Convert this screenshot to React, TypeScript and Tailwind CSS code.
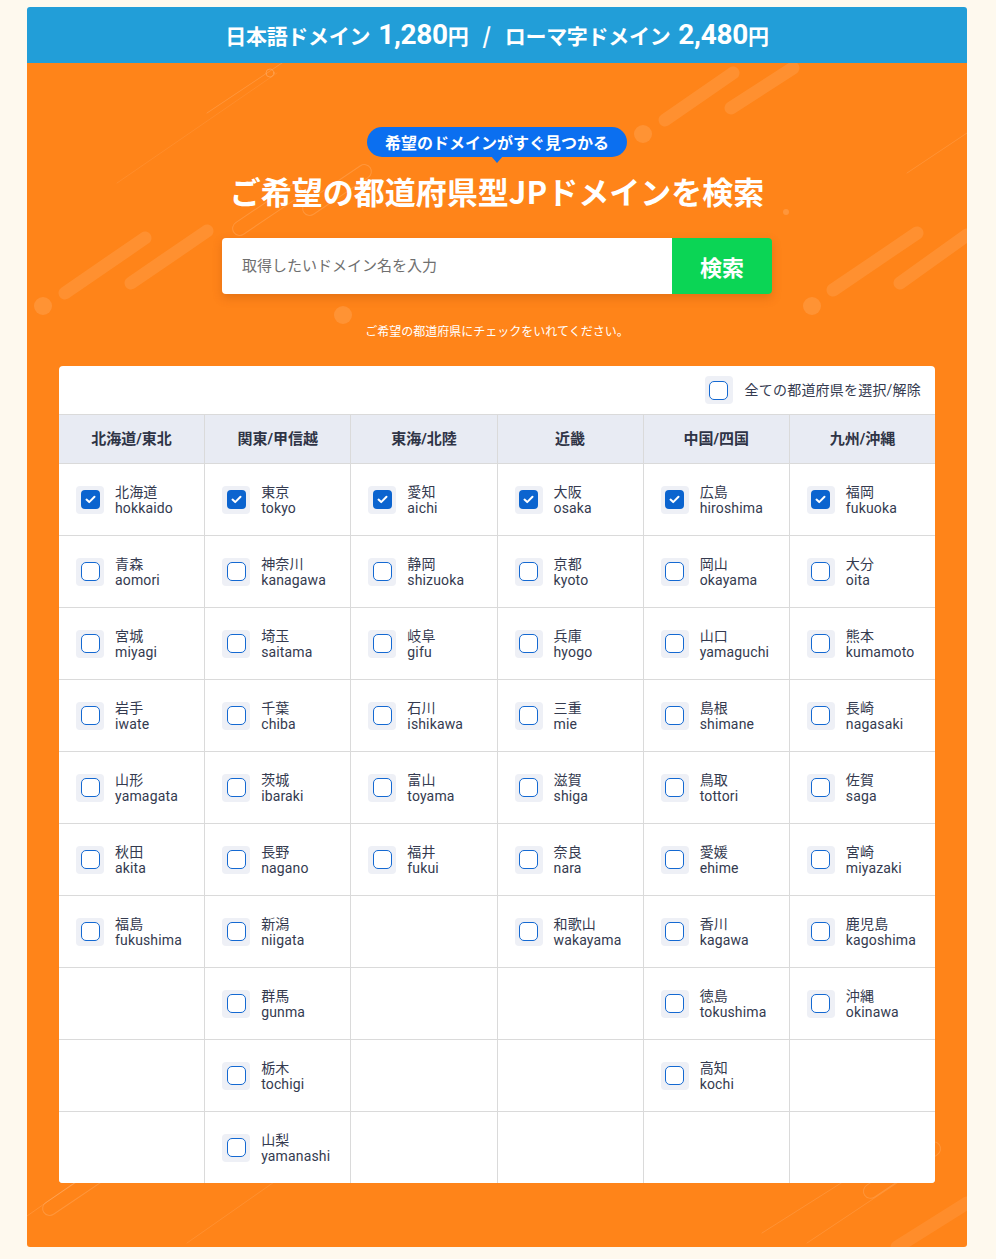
import React from "react";

type Pref = { ja: string; en: string; checked?: boolean };

const columns: { title: string; items: Pref[] }[] = [
  {
    title: "北海道/東北",
    items: [
      { ja: "北海道", en: "hokkaido", checked: true },
      { ja: "青森", en: "aomori" },
      { ja: "宮城", en: "miyagi" },
      { ja: "岩手", en: "iwate" },
      { ja: "山形", en: "yamagata" },
      { ja: "秋田", en: "akita" },
      { ja: "福島", en: "fukushima" },
    ],
  },
  {
    title: "関東/甲信越",
    items: [
      { ja: "東京", en: "tokyo", checked: true },
      { ja: "神奈川", en: "kanagawa" },
      { ja: "埼玉", en: "saitama" },
      { ja: "千葉", en: "chiba" },
      { ja: "茨城", en: "ibaraki" },
      { ja: "長野", en: "nagano" },
      { ja: "新潟", en: "niigata" },
      { ja: "群馬", en: "gunma" },
      { ja: "栃木", en: "tochigi" },
      { ja: "山梨", en: "yamanashi" },
    ],
  },
  {
    title: "東海/北陸",
    items: [
      { ja: "愛知", en: "aichi", checked: true },
      { ja: "静岡", en: "shizuoka" },
      { ja: "岐阜", en: "gifu" },
      { ja: "石川", en: "ishikawa" },
      { ja: "富山", en: "toyama" },
      { ja: "福井", en: "fukui" },
    ],
  },
  {
    title: "近畿",
    items: [
      { ja: "大阪", en: "osaka", checked: true },
      { ja: "京都", en: "kyoto" },
      { ja: "兵庫", en: "hyogo" },
      { ja: "三重", en: "mie" },
      { ja: "滋賀", en: "shiga" },
      { ja: "奈良", en: "nara" },
      { ja: "和歌山", en: "wakayama" },
    ],
  },
  {
    title: "中国/四国",
    items: [
      { ja: "広島", en: "hiroshima", checked: true },
      { ja: "岡山", en: "okayama" },
      { ja: "山口", en: "yamaguchi" },
      { ja: "島根", en: "shimane" },
      { ja: "鳥取", en: "tottori" },
      { ja: "愛媛", en: "ehime" },
      { ja: "香川", en: "kagawa" },
      { ja: "徳島", en: "tokushima" },
      { ja: "高知", en: "kochi" },
    ],
  },
  {
    title: "九州/沖縄",
    items: [
      { ja: "福岡", en: "fukuoka", checked: true },
      { ja: "大分", en: "oita" },
      { ja: "熊本", en: "kumamoto" },
      { ja: "長崎", en: "nagasaki" },
      { ja: "佐賀", en: "saga" },
      { ja: "宮崎", en: "miyazaki" },
      { ja: "鹿児島", en: "kagoshima" },
      { ja: "沖縄", en: "okinawa" },
    ],
  },
];

function Check({ checked }: { checked?: boolean }) {
  return (
    <div className="flex h-[28px] w-[28px] shrink-0 items-center justify-center rounded-[4px] bg-[#eef0f6]">
      {checked ? (
        <div className="flex h-[19px] w-[19px] items-center justify-center rounded-[4px] bg-[#0b64cf]">
          <svg width="11" height="9" viewBox="0 0 11 9" fill="none">
            <path d="M1.5 4.6 L4.2 7.1 L9.5 1.8" stroke="white" strokeWidth="2" strokeLinecap="round" strokeLinejoin="round" />
          </svg>
        </div>
      ) : (
        <div className="h-[19px] w-[19px] rounded-[5px] border-[1.5px] border-[#1469d2] bg-white" />
      )}
    </div>
  );
}

function Decorations() {
  return (
    <svg className="pointer-events-none absolute inset-0 h-full w-full" viewBox="0 0 940 1184" preserveAspectRatio="none">
      <g stroke="white" strokeLinecap="round" fill="none">
        <line x1="38" y1="230" x2="118" y2="175" strokeWidth="13" strokeOpacity="0.1" />
        <line x1="104" y1="220" x2="180" y2="168" strokeWidth="13" strokeOpacity="0.1" />
        <line x1="638" y1="57" x2="706" y2="10" strokeWidth="13" strokeOpacity="0.1" />
        <line x1="704" y1="45" x2="766" y2="5" strokeWidth="13" strokeOpacity="0.1" />
        <line x1="806" y1="227" x2="890" y2="170" strokeWidth="13" strokeOpacity="0.1" />
        <line x1="873" y1="220" x2="940" y2="172" strokeWidth="13" strokeOpacity="0.1" />
        <line x1="180" y1="50" x2="270" y2="-10" strokeWidth="1" strokeOpacity="0.15" />
        <line x1="90" y1="120" x2="250" y2="10" strokeWidth="1" strokeOpacity="0.08" />
        <line x1="880" y1="110" x2="940" y2="70" strokeWidth="1" strokeOpacity="0.12" />
        <rect x="200" y="140" width="80" height="14" rx="7" transform="rotate(-34 240 147)" strokeWidth="1" strokeOpacity="0.15" />
        <rect x="270" y="120" width="80" height="14" rx="7" transform="rotate(-34 310 127)" strokeWidth="1" strokeOpacity="0.15" />
        <rect x="10" y="1120" width="80" height="14" rx="7" transform="rotate(-34 50 1127)" strokeWidth="1" strokeOpacity="0.15" />
        <rect x="830" y="1100" width="90" height="14" rx="7" transform="rotate(-34 875 1107)" strokeWidth="1" strokeOpacity="0.15" />
        <line x1="-10" y1="1160" x2="90" y2="1090" strokeWidth="1" strokeOpacity="0.12" />
        <line x1="160" y1="1180" x2="260" y2="1110" strokeWidth="1" strokeOpacity="0.1" />
        <line x1="735" y1="1170" x2="830" y2="1110" strokeWidth="1" strokeOpacity="0.12" />
        <line x1="780" y1="1180" x2="900" y2="1100" strokeWidth="1" strokeOpacity="0.12" />
        <line x1="870" y1="1184" x2="940" y2="1140" strokeWidth="13" strokeOpacity="0.08" />
        <circle cx="243" cy="10" r="4" strokeWidth="1" strokeOpacity="0.2" />
      </g>
      <g fill="white">
        <circle cx="16" cy="243" r="9" fillOpacity="0.12" />
        <circle cx="316" cy="252" r="9" fillOpacity="0.12" />
        <circle cx="616" cy="71" r="9" fillOpacity="0.12" />
        <circle cx="785" cy="243" r="9" fillOpacity="0.12" />
        <circle cx="759" cy="149" r="3" fillOpacity="0.15" />
        <circle cx="-10" cy="1093" r="9" fillOpacity="0.12" />
      </g>
    </svg>
  );
}

export default function App() {
  const rows = 10;
  const cells: React.ReactNode[] = [];
  for (let r = 0; r < rows; r++) {
    for (let c = 0; c < 6; c++) {
      const item = columns[c].items[r];
      cells.push(
        <div key={`${r}-${c}`} className="flex h-[71px] items-center bg-white pl-[17px]">
          {item && (
            <>
              <Check checked={item.checked} />
              <div className="ml-[11px] flex flex-col text-[14px] leading-[16px] tracking-[0.15px] text-[#343a4f]">
                <span>{item.ja}</span>
                <span>{item.en}</span>
              </div>
            </>
          )}
        </div>
      );
    }
  }

  return (
    <div
      className="min-h-[1259px] bg-[#fef9ee] pt-[7px]"
      style={{ fontFamily: 'Roboto, "Noto Sans CJK JP", sans-serif' }}
    >
      <div className="ml-[27px] w-[940px] overflow-hidden rounded-t-[3px] rounded-b-[3px]">
        <div className="flex h-[56px] items-center justify-center bg-[#229ed8] text-white" style={{ fontFamily: '"Noto Sans CJK JP", sans-serif' }}>
          <div className="flex items-baseline font-bold tracking-[-0.3px]">
            <span className="text-[21px]">日本語ドメイン</span>
            <span className="ml-[8px] text-[28px]" style={{ fontFamily: 'Roboto, sans-serif' }}>1,280</span>
            <span className="text-[21px]">円</span>
            <span className="mx-[14px] text-[22px]">/</span>
            <span className="text-[21px]">ローマ字ドメイン</span>
            <span className="ml-[8px] text-[28px]" style={{ fontFamily: 'Roboto, sans-serif' }}>2,480</span>
            <span className="text-[21px]">円</span>
          </div>
        </div>

        <div className="relative bg-[#ff8419] pb-[64px] pt-[64px]">
          <Decorations />
          <div className="relative flex flex-col items-center">
            <div className="relative flex h-[30px] items-center rounded-full bg-[#0b6ff0] px-[18px] text-[16px] font-bold text-white" style={{ fontFamily: '"Noto Sans CJK JP", sans-serif' }}>
              希望のドメインがすぐ見つかる
              <div className="absolute bottom-[-6px] left-1/2 h-0 w-0 -translate-x-1/2 border-x-[6px] border-t-[7px] border-x-transparent border-t-[#0b6ff0]" />
            </div>
            <h1 className="mt-[12px] text-[31px] font-bold leading-[44px] text-white" style={{ fontFamily: '"Noto Sans CJK JP", sans-serif' }}>
              ご希望の都道府県型JPドメインを検索
            </h1>
            <div className="mt-[25px] flex h-[56px] w-[550px] overflow-hidden rounded-[4px] shadow-[0_4px_10px_rgba(150,60,0,0.25)]">
              <div className="flex flex-1 items-center bg-white pl-[20px] text-[15px] text-[#6f6f6f]">
                取得したいドメイン名を入力
              </div>
              <div className="flex w-[100px] items-center justify-center bg-[#0bd555] text-[22px] font-bold text-white" style={{ fontFamily: '"Noto Sans CJK JP", sans-serif' }}>
                検索
              </div>
            </div>
            <p className="mt-[30px] text-[12px] leading-[16px] text-white">ご希望の都道府県にチェックをいれてください。</p>

            <div className="mt-[26px] w-[876px] overflow-hidden rounded-[4px] bg-white">
              <div className="flex h-[48px] items-center justify-end pr-[14px]">
                <Check />
                <span className="ml-[12px] text-[14px] tracking-[0.2px] text-[#343a4f]">全ての都道府県を選択/解除</span>
              </div>
              <div className="grid grid-cols-6 gap-px border-t border-[#dadada] bg-[#dadada]">
                {columns.map((col) => (
                  <div key={col.title} className="flex h-[48px] items-center justify-center bg-[#e8ebf3] text-[15px] font-bold text-[#2f3446]">
                    {col.title}
                  </div>
                ))}
                {cells}
              </div>
            </div>
          </div>
        </div>
      </div>
    </div>
  );
}
